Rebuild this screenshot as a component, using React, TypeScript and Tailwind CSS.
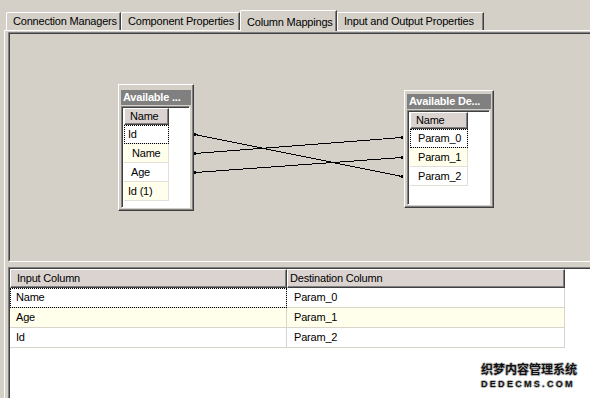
import React from "react";

type Row = { label: string; pad: string; yellow?: boolean; focus?: boolean };

function MapBox({
  boxClass,
  title,
  rowWidth,
  rows,
}: {
  boxClass: string;
  title: string;
  rowWidth: string;
  rows: Row[];
}) {
  return (
    <div
      className={
        "absolute flex flex-col bg-[#d4d0c8] border border-t-white border-l-white border-b-[#404040] border-r-[#404040] shadow-[inset_-1px_-1px_#808080] px-[2px] pb-[2px] " +
        boxClass
      }
    >
      <div className="h-[15px] bg-[#808080] text-white font-bold leading-[15px] pl-[2px] whitespace-nowrap overflow-hidden">
        {title}
      </div>
      <div className="flex-1 mt-[1px] mr-[1px] bg-white border border-t-[#808080] border-l-[#808080] border-b-white border-r-white shadow-[inset_1px_1px_#404040] pl-[2px] pt-[1px]">
        <div className={"h-[17px] leading-[15px] pl-[5px] bg-[#dad3cf] border border-t-white border-l-white border-b-[#404040] border-r-[#404040] shadow-[inset_-1px_-1px_#808080] " + rowWidth}>
          Name
        </div>
        {rows.map((r) => (
          <div
            key={r.label}
            className={
              "h-[19px] leading-[18px] border-b border-r border-[#e2dfd8] " +
              rowWidth +
              " " +
              r.pad +
              (r.yellow ? " bg-[#ffffec]" : " bg-white") +
              (r.focus ? " outline outline-1 outline-dotted outline-black -outline-offset-1" : "")
            }
          >
            {r.label}
          </div>
        ))}
      </div>
    </div>
  );
}

export default function App() {
  return (
    <div className="w-[590px] h-[398px] bg-[#d4d0c8] overflow-hidden relative text-[11px] tracking-[-0.2px] text-black [font-family:'Liberation_Sans',Arial,sans-serif]">
      {/* Tabs */}
      <div className="flex items-end h-[30px] pl-[6px]">
        <div className="w-[115px] h-[18px] flex items-center pl-[6px] border-l border-t border-white border-r border-r-[#404040] shadow-[inset_-1px_0_#808080] rounded-tl-[2px] whitespace-nowrap">
          Connection Managers
        </div>
        <div className="w-[119px] h-[18px] flex items-center pl-[6px] border-l border-t border-white border-r border-r-[#404040] shadow-[inset_-1px_0_#808080] rounded-tl-[2px] whitespace-nowrap">
          Component Properties
        </div>
        <div className="relative z-10 -mb-px w-[97px] h-[21px] flex items-start pt-[3px] pl-[6px] bg-[#d4d0c8] border-l border-t border-white border-r border-r-[#404040] shadow-[inset_-1px_0_#808080] rounded-tl-[2px] whitespace-nowrap">
          Column Mappings
        </div>
        <div className="w-[147px] h-[18px] flex items-center pl-[6px] border-l border-t border-white border-r border-r-[#404040] shadow-[inset_-1px_0_#808080] rounded-tl-[2px] whitespace-nowrap">
          Input and Output Properties
        </div>
      </div>

      {/* Tab panel */}
      <div className="ml-[4px] w-[640px] border-l border-t border-white pl-[3px] pt-[1px]">
        {/* Diagram */}
        <div className="h-[230px] border border-t-[#808080] border-l-[#808080] border-b-white border-r-white">
          <div className="relative h-full border border-t-[#404040] border-l-[#404040] border-b-[#d4d0c8] border-r-[#d4d0c8]">
            <svg className="absolute left-0 top-0" width="600" height="226" shapeRendering="crispEdges">
              <g stroke="#000" strokeWidth="1" fill="none">
                <line x1="185" y1="100.5" x2="392" y2="142.5" />
                <line x1="185" y1="119.5" x2="392" y2="103.5" />
                <line x1="185" y1="138.5" x2="392" y2="123.5" />
              </g>
              <g fill="#000">
                <rect x="184" y="99" width="2" height="3" />
                <rect x="184" y="118" width="2" height="3" />
                <rect x="184" y="137" width="2" height="3" />
                <rect x="391" y="141" width="2" height="3" />
                <rect x="391" y="102" width="2" height="3" />
                <rect x="391" y="122" width="2" height="3" />
              </g>
            </svg>

            <MapBox
              boxClass="left-[108px] top-[50px] w-[76px] h-[127px] pt-[5px]"
              title="Available ..."
              rowWidth="w-[45px]"
              rows={[
                { label: "Id", pad: "pl-[4px]", focus: true },
                { label: "Name", pad: "pl-[8px]", yellow: true },
                { label: "Age", pad: "pl-[7px]" },
                { label: "Id (1)", pad: "pl-[4px]", yellow: true },
              ]}
            />
            <MapBox
              boxClass="left-[394px] top-[56px] w-[90px] h-[118px] pt-[3px]"
              title="Available De..."
              rowWidth="w-[58px]"
              rows={[
                { label: "Param_0", pad: "pl-[8px]", focus: true },
                { label: "Param_1", pad: "pl-[8px]", yellow: true },
                { label: "Param_2", pad: "pl-[8px]" },
              ]}
            />
          </div>
        </div>

        {/* Grid */}
        <div className="mt-[5px] h-[200px] border border-t-[#808080] border-l-[#808080] border-b-white border-r-white">
          <div className="h-full bg-white border border-t-[#404040] border-l-[#404040] border-b-[#d4d0c8] border-r-[#d4d0c8]">
            <div className="flex h-[19px]">
              <div className="w-[277px] h-full leading-[17px] pl-[6px] bg-[#dad3cf] border border-t-white border-l-white border-b-[#404040] border-r-[#404040] shadow-[inset_-1px_-1px_#808080]">
                Input Column
              </div>
              <div className="w-[278px] h-full leading-[17px] pl-[2px] bg-[#dad3cf] border border-t-white border-l-white border-b-[#404040] border-r-[#404040] shadow-[inset_-1px_-1px_#808080]">
                Destination Column
              </div>
            </div>
            {[
              { a: "Name", b: "Param_0", y: false, f: true },
              { a: "Age", b: "Param_1", y: true, f: false },
              { a: "Id", b: "Param_2", y: false, f: false },
            ].map((r) => (
              <div key={r.a} className={"flex h-[20px] w-[555px]" + (r.y ? " bg-[#ffffec]" : " bg-white")}>
                <div
                  className={
                    "w-[277px] h-full leading-[19px] pl-[6px] border-r border-b border-[#d8d4cc]" +
                    (r.f ? " outline outline-1 outline-dotted outline-black -outline-offset-1" : "")
                  }
                >
                  {r.a}
                </div>
                <div className="w-[278px] h-full leading-[19px] pl-[7px] border-r border-b border-[#d8d4cc]">{r.b}</div>
              </div>
            ))}
          </div>
        </div>
      </div>

      {/* Watermark */}
      <div className="absolute left-[481px] top-[362px] flex flex-col items-start tracking-normal text-[#111] [text-shadow:1px_0_#bbb,-1px_0_#bbb,0_1px_#bbb,0_-1px_#bbb]">
        <div className="text-[12px] leading-[14px] font-bold [font-family:'Noto_Sans_CJK_SC',sans-serif]">织梦内容管理系统</div>
        <div className="text-[9px] leading-[10px] font-bold tracking-[2.3px] mt-[3px]">DEDECMS.COM</div>
      </div>
    </div>
  );
}
